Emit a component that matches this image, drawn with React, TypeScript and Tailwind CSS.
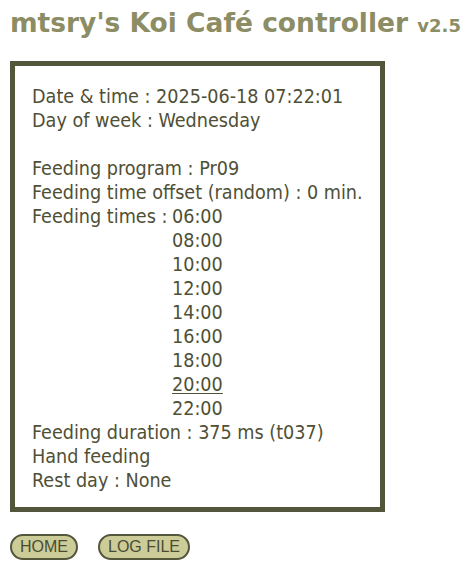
const times = ["06:00", "08:00", "10:00", "12:00", "14:00", "16:00", "18:00", "20:00", "22:00"];

export default function App() {
  return (
    <div className="min-h-[570px] w-[470px] bg-white px-[10px] pt-[6px] text-[#4f5035]">
      <h1 className="text-[26.5px] font-bold leading-[34px] text-[#8c8d64] whitespace-nowrap" style={{ fontFamily: '"DejaVu Sans", sans-serif' }}>
        mtsry's Koi Café controller <span className="text-[18px]">v2.5</span>
      </h1>

      <div
        className="mt-[18px] w-[375px] border-[5px] border-[#54563b] pl-[17px] pr-2 pt-[19px] pb-[14px] text-[19.6px] leading-[24px]"
        style={{ fontFamily: '"DejaVu Sans Condensed", "DejaVu Sans", sans-serif' }}
      >
        <div>Date &amp; time : 2025-06-18 07:22:01</div>
        <div>Day of week : Wednesday</div>
        <div className="h-6" />
        <div>Feeding program : Pr09</div>
        <div>Feeding time offset (random) : 0 min.</div>
        <div className="flex">
          <div className="w-[140px] shrink-0">Feeding times :</div>
          <div className="flex flex-col">
            {times.map((t) => (
              <span key={t} className={t === "20:00" ? "underline decoration-1 underline-offset-2" : ""}>
                {t}
              </span>
            ))}
          </div>
        </div>
        <div>Feeding duration : 375 ms (t037)</div>
        <div>Hand feeding</div>
        <div>Rest day : None</div>
      </div>

      <div className="mt-[22px] flex gap-5" style={{ fontFamily: '"Liberation Sans", Arial, sans-serif' }}>
        <button className="h-[26px] rounded-full border-2 border-[#54563b] bg-[#cccc99] px-[8px] text-[16px] leading-none text-[#4a4b33]">
          HOME
        </button>
        <button className="h-[26px] rounded-full border-2 border-[#54563b] bg-[#cccc99] px-[8px] text-[16px] leading-none text-[#4a4b33]">
          LOG FILE
        </button>
      </div>
    </div>
  );
}
